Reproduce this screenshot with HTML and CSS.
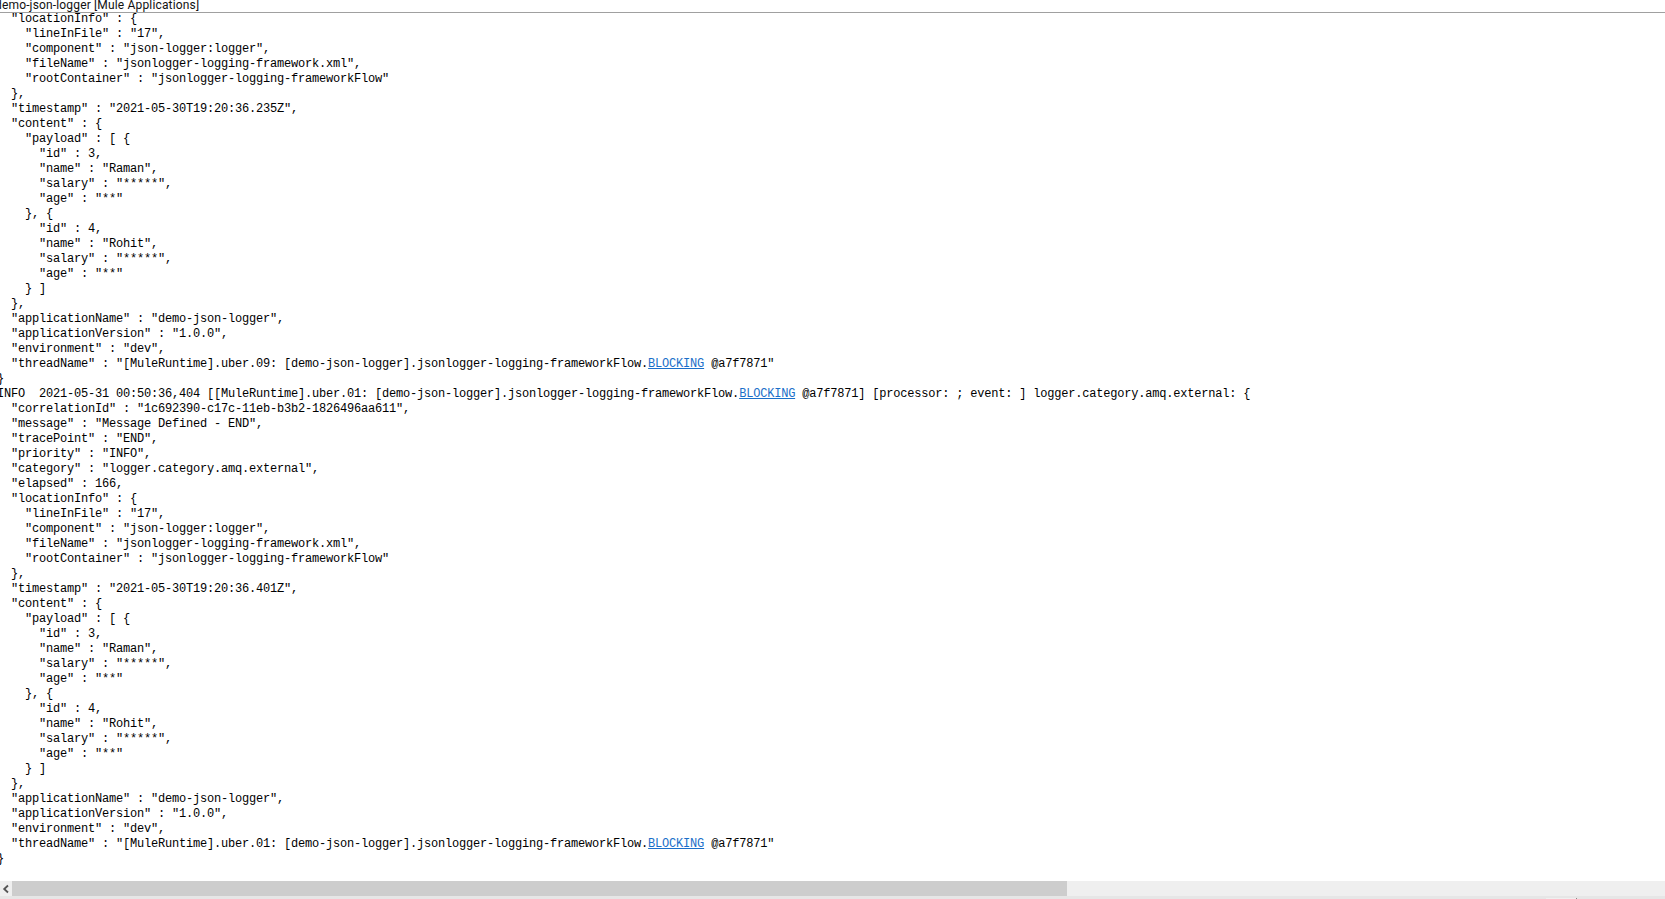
FILE: index.html
```html
<!DOCTYPE html>
<html lang="en">
<head>
<meta charset="utf-8">
<title>demo-json-logger console</title>
<link rel="stylesheet" href="styles.css">
</head>
<body>
<div class="window">
<div class="title"><span class="title-text">demo-json-logger [Mule Applications]</span></div>
<div class="console"><pre class="log">  "locationInfo" : {
    "lineInFile" : "17",
    "component" : "json-logger:logger",
    "fileName" : "jsonlogger-logging-framework.xml",
    "rootContainer" : "jsonlogger-logging-frameworkFlow"
  },
  "timestamp" : "2021-05-30T19:20:36.235Z",
  "content" : {
    "payload" : [ {
      "id" : 3,
      "name" : "Raman",
      "salary" : "*****",
      "age" : "**"
    }, {
      "id" : 4,
      "name" : "Rohit",
      "salary" : "*****",
      "age" : "**"
    } ]
  },
  "applicationName" : "demo-json-logger",
  "applicationVersion" : "1.0.0",
  "environment" : "dev",
  "threadName" : "[MuleRuntime].uber.09: [demo-json-logger].jsonlogger-logging-frameworkFlow.<a class="link">BLOCKING</a> @a7f7871"
}
INFO  2021-05-31 00:50:36,404 [[MuleRuntime].uber.01: [demo-json-logger].jsonlogger-logging-frameworkFlow.<a class="link">BLOCKING</a> @a7f7871] [processor: ; event: ] logger.category.amq.external: {
  "correlationId" : "1c692390-c17c-11eb-b3b2-1826496aa611",
  "message" : "Message Defined - END",
  "tracePoint" : "END",
  "priority" : "INFO",
  "category" : "logger.category.amq.external",
  "elapsed" : 166,
  "locationInfo" : {
    "lineInFile" : "17",
    "component" : "json-logger:logger",
    "fileName" : "jsonlogger-logging-framework.xml",
    "rootContainer" : "jsonlogger-logging-frameworkFlow"
  },
  "timestamp" : "2021-05-30T19:20:36.401Z",
  "content" : {
    "payload" : [ {
      "id" : 3,
      "name" : "Raman",
      "salary" : "*****",
      "age" : "**"
    }, {
      "id" : 4,
      "name" : "Rohit",
      "salary" : "*****",
      "age" : "**"
    } ]
  },
  "applicationName" : "demo-json-logger",
  "applicationVersion" : "1.0.0",
  "environment" : "dev",
  "threadName" : "[MuleRuntime].uber.01: [demo-json-logger].jsonlogger-logging-frameworkFlow.<a class="link">BLOCKING</a> @a7f7871"
}</pre></div>
<div class="scrollbar">
<div class="arrow"><svg width="8" height="10" viewBox="0 0 8 10"><path d="M6 1.5 2.2 5 6 8.5" fill="none" stroke="#555" stroke-width="1.8"/></svg></div>
<div class="thumb"></div>
</div>
<div class="footer"><span class="tick"></span></div>
</div>
</body>
</html>
```
FILE: styles.css
```css
html, body {
  margin: 0;
  height: 100%;
  background: #fff;
  overflow: hidden;
}
.window {
  height: 899px;
  display: flex;
  flex-direction: column;
}
.title {
  height: 12px;
  border-bottom: 1px solid #a0a0a0;
  overflow: hidden;
  flex: none;
  font: 12px/12px Roboto, "Liberation Sans", sans-serif;
  letter-spacing: 0.16px;
  color: #111;
  white-space: nowrap;
}
.title-text {
  display: block;
  margin-left: -5px;
  margin-top: -1px;
}
.console {
  flex: 1;
  min-height: 0;
  overflow: hidden;
}
.log {
  margin: -1px 0 0 -3px;
  font: 12px/15px "Liberation Mono", monospace;
  letter-spacing: -0.2px;
  color: #000;
}
.link {
  color: #1a6fc9;
  text-decoration: underline;
}
.scrollbar {
  flex: none;
  height: 15px;
  background: #efefef;
  display: flex;
}
.arrow {
  width: 12px;
  display: flex;
  align-items: center;
  justify-content: center;
}
.thumb {
  width: 1055px;
  background: #cdcdcd;
}
.footer {
  flex: none;
  height: 3px;
  background: #e6e6e6;
  display: flex;
  align-items: flex-end;
  padding-left: 1546px;
}
.tick {
  width: 30px;
  height: 1px;
  background: #efefef;
  border-right: 1px solid #888;
}
```
